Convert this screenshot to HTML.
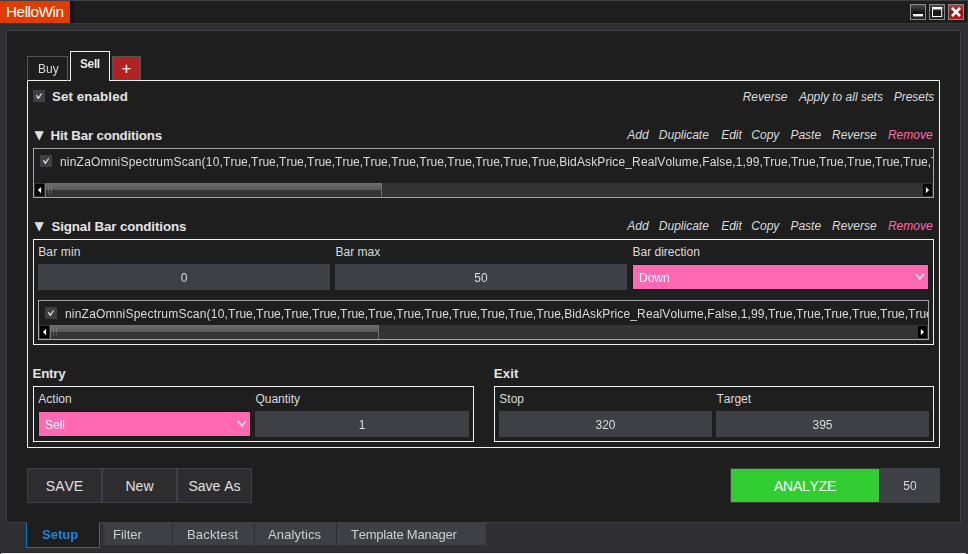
<!DOCTYPE html>
<html><head><meta charset="utf-8"><title>HelloWin</title>
<style>
html,body{margin:0;padding:0;}
body{width:968px;height:554px;overflow:hidden;background:#2f2f32;font-family:"Liberation Sans", "DejaVu Sans", sans-serif;position:relative;}
#root{position:absolute;left:0;top:0;width:968px;height:554px;overflow:hidden;}
#root div,#root .t,#root .a{position:absolute;}
.t{white-space:nowrap;font-kerning:none;}
.t span{position:static;}
.g{will-change:transform;}
.lk{position:absolute;white-space:nowrap;font-size:12px;line-height:16px;font-style:italic;}
.lk span{position:static !important;}
.clip{overflow:hidden;}
</style></head><body><div id="root">
<div style="left:0px;top:0px;width:968px;height:1px;background:#3f3f46;"></div>
<div style="left:0px;top:1px;width:967px;height:22px;background:#1e1e1e;"></div>
<div style="left:0px;top:23px;width:968px;height:1px;background:#38383c;"></div>
<div style="left:70px;top:1px;width:6px;height:22px;background:linear-gradient(to right,#111,#1e1e1e);"></div>
<div style="left:0px;top:1px;width:70px;height:22px;background:#e03c00;"></div>
<span class="t" style="left:6.0px;top:1.86px;font-size:15.4px;line-height:19.4px;color:#fff;letter-spacing:-0.5px;">HelloWin</span>
<div style="left:910px;top:4px;width:16px;height:16px;background:linear-gradient(#4a4a4a,#1a1a1a 50%,#101010 55%,#2a2a2a);box-sizing:border-box;border:1px solid #8a8a8a;overflow:hidden;"><div style="position:absolute;left:-1px;top:-1px"><svg width="16" height="16" viewBox="0 0 16 16"><rect x="3" y="10" width="10" height="2.4" fill="#fff"/></svg></div></div>
<div style="left:929px;top:4px;width:16px;height:16px;background:linear-gradient(#4a4a4a,#1a1a1a 50%,#101010 55%,#2a2a2a);box-sizing:border-box;border:1px solid #8a8a8a;overflow:hidden;"><div style="position:absolute;left:-1px;top:-1px"><svg width="16" height="16" viewBox="0 0 16 16"><rect x="3.5" y="3.5" width="9.2" height="9" fill="none" stroke="#fff" stroke-width="1"/><rect x="3" y="3" width="10.2" height="2.4" fill="#fff"/></svg></div></div>
<div style="left:948px;top:4px;width:16px;height:16px;background:linear-gradient(#c03a3a,#a01818 45%,#8e1010 50%,#b02020);box-sizing:border-box;border:1px solid #8a8a8a;overflow:hidden;"><div style="position:absolute;left:-1px;top:-1px"><svg width="16" height="16" viewBox="0 0 16 16"><path d="M4 4 L12 12 M12 4 L4 12" stroke="#fff" stroke-width="2.6" fill="none"/></svg></div></div>
<div style="left:6px;top:30px;width:955px;height:493px;background:#1e1e1e;border:1px solid #3f3f46;box-sizing:border-box;"></div>
<div style="left:27px;top:80px;width:913px;height:368px;background:#1e1e1e;border:1px solid #f0f0f0;box-sizing:border-box;"></div>
<div style="left:27px;top:56px;width:41px;height:25px;background:#1e1e1e;box-sizing:border-box;border:1px solid #555;border-bottom:1px solid #f0f0f0;"></div>
<div style="left:70px;top:51px;width:40px;height:30px;background:#1e1e1e;box-sizing:border-box;border:1px solid #f0f0f0;border-bottom:none;"></div>
<div style="left:112px;top:56px;width:29px;height:24px;background:#b22222;box-sizing:border-box;border:1px solid #555;border-bottom:none;"></div>
<span class="t" style="left:121.7px;top:59.06px;font-size:16px;line-height:20px;color:#fff;">+</span>
<div style="left:33px;top:90px;width:12px;height:12px;background:#3f3f46;"><svg width="12" height="12" viewBox="0 0 12 12" style="display:block"><polygon points="2.8,5.4 4.0,5.0 5.4,7.1 8.4,3.1 9.1,3.7 5.7,8.9 4.9,8.9" fill="#e2e2e2"/></svg></div>
<span class="t" style="left:52px;top:87.52px;font-size:13.33px;line-height:17.33px;color:#e4e4e4;font-weight:bold;letter-spacing:0.1px;">Set enabled</span>
<span class="t" style="left:742.7px;top:88.74px;font-size:12px;line-height:16px;color:#dcdcdc;font-style:italic;">Reverse</span>
<span class="t" style="left:798.9px;top:88.74px;font-size:12px;line-height:16px;color:#dcdcdc;font-style:italic;">Apply to all sets</span>
<span class="t" style="left:893.7px;top:88.74px;font-size:12px;line-height:16px;color:#dcdcdc;font-style:italic;">Presets</span>
<span class="t" style="left:627.3px;top:127.14px;font-size:12px;line-height:16px;color:#dcdcdc;font-style:italic;">Add</span>
<span class="t" style="left:658.8px;top:127.14px;font-size:12px;line-height:16px;color:#dcdcdc;font-style:italic;">Duplicate</span>
<span class="t" style="left:721.2px;top:127.14px;font-size:12px;line-height:16px;color:#dcdcdc;font-style:italic;">Edit</span>
<span class="t" style="left:751.3px;top:127.14px;font-size:12px;line-height:16px;color:#dcdcdc;font-style:italic;">Copy</span>
<span class="t" style="left:790.4px;top:127.14px;font-size:12px;line-height:16px;color:#dcdcdc;font-style:italic;">Paste</span>
<span class="t" style="left:832.0px;top:127.14px;font-size:12px;line-height:16px;color:#dcdcdc;font-style:italic;">Reverse</span>
<span class="t" style="left:887.9px;top:127.14px;font-size:12px;line-height:16px;color:#ff69b4;font-style:italic;">Remove</span>
<span class="t" style="left:627.3px;top:218.14px;font-size:12px;line-height:16px;color:#dcdcdc;font-style:italic;">Add</span>
<span class="t" style="left:658.8px;top:218.14px;font-size:12px;line-height:16px;color:#dcdcdc;font-style:italic;">Duplicate</span>
<span class="t" style="left:721.2px;top:218.14px;font-size:12px;line-height:16px;color:#dcdcdc;font-style:italic;">Edit</span>
<span class="t" style="left:751.3px;top:218.14px;font-size:12px;line-height:16px;color:#dcdcdc;font-style:italic;">Copy</span>
<span class="t" style="left:790.4px;top:218.14px;font-size:12px;line-height:16px;color:#dcdcdc;font-style:italic;">Paste</span>
<span class="t" style="left:832.0px;top:218.14px;font-size:12px;line-height:16px;color:#dcdcdc;font-style:italic;">Reverse</span>
<span class="t" style="left:887.9px;top:218.14px;font-size:12px;line-height:16px;color:#ff69b4;font-style:italic;">Remove</span>
<span class="t" style="left:34.4px;top:127.2px;font-family:'DejaVu Sans',sans-serif;font-size:12px;line-height:16px;color:#e0e0e0;">&#9660;</span>
<span class="t" style="left:50.6px;top:127.02px;font-size:13.33px;line-height:17.33px;color:#e4e4e4;font-weight:bold;letter-spacing:-0.19px;">Hit Bar conditions</span>
<span class="t" style="left:34.4px;top:217.89999999999998px;font-family:'DejaVu Sans',sans-serif;font-size:12px;line-height:16px;color:#e0e0e0;">&#9660;</span>
<span class="t" style="left:51.4px;top:217.52px;font-size:13.33px;line-height:17.33px;color:#e4e4e4;font-weight:bold;letter-spacing:-0.1px;">Signal Bar conditions</span>
<div style="left:33px;top:148px;width:901px;height:50px;background:#1e1e1e;border:1px solid #a4a4a4;box-sizing:border-box;"></div>
<div style="left:40px;top:155px;width:12px;height:12px;background:#3f3f46;"><svg width="12" height="12" viewBox="0 0 12 12" style="display:block"><polygon points="2.8,5.4 4.0,5.0 5.4,7.1 8.4,3.1 9.1,3.7 5.7,8.9 4.9,8.9" fill="#e2e2e2"/></svg></div>
<div style="left:34px;top:183px;width:899px;height:14px;background:#333333;"></div>
<div style="left:45px;top:183px;width:337px;height:14px;background:linear-gradient(#6e6e6e 0%,#585858 50%,#353535 50%,#353535 100%);box-sizing:border-box;border-right:1px solid #707070;border-left:1px solid #777;"></div>
<div style="left:48px;top:186px;width:1px;height:8px;background:rgba(255,255,255,.16);"></div>
<div style="left:51px;top:186px;width:1px;height:8px;background:rgba(255,255,255,.16);"></div>
<div style="left:35px;top:184px;width:9px;height:12px;background:#000;"><svg width="9" height="12" viewBox="0 0 9 12" style="display:block"><polygon points="2.8,6.1 6.1,3.0 6.1,9.2" fill="#fff"/></svg></div>
<div style="left:923px;top:184px;width:9px;height:12px;background:#000;"><svg width="9" height="12" viewBox="0 0 9 12" style="display:block"><polygon points="6.1,6.1 2.8,3.0 2.8,9.2" fill="#fff"/></svg></div>
<div style="left:33px;top:239px;width:901px;height:106px;background:#1e1e1e;border:1px solid #f0f0f0;box-sizing:border-box;"></div>
<span class="t" style="left:38.2px;top:243.74px;font-size:12px;line-height:16px;color:#dcdcdc;letter-spacing:0.15px;">Bar min</span>
<span class="t" style="left:335.5px;top:243.74px;font-size:12px;line-height:16px;color:#dcdcdc;">Bar max</span>
<span class="t" style="left:632.5px;top:243.74px;font-size:12px;line-height:16px;color:#dcdcdc;">Bar direction</span>
<div style="left:38px;top:264px;width:292px;height:26px;background:#3f3f46;"></div>
<div style="left:335px;top:264px;width:292px;height:26px;background:#3f3f46;"></div>
<div style="left:632px;top:264px;width:297px;height:26px;background:#181818;"></div>
<div style="left:633px;top:265px;width:295px;height:24px;background:#ff69b4;"></div>
<svg class="a" style="left:915px;top:273.1px" width="10" height="8" viewBox="0 0 10 8"><path d="M0.8 0.9 L4.9 5.8 L9.0 0.9" stroke="#d8d4d6" stroke-width="1.8" fill="none"/></svg>
<div style="left:38px;top:300px;width:891px;height:40px;background:#1e1e1e;border:1px solid #a4a4a4;box-sizing:border-box;"></div>
<div style="left:45px;top:307px;width:12px;height:12px;background:#3f3f46;"><svg width="12" height="12" viewBox="0 0 12 12" style="display:block"><polygon points="2.8,5.4 4.0,5.0 5.4,7.1 8.4,3.1 9.1,3.7 5.7,8.9 4.9,8.9" fill="#e2e2e2"/></svg></div>
<div style="left:39px;top:325px;width:889px;height:14px;background:#333333;"></div>
<div style="left:50px;top:325px;width:329px;height:14px;background:linear-gradient(#6e6e6e 0%,#585858 50%,#353535 50%,#353535 100%);box-sizing:border-box;border-right:1px solid #707070;border-left:1px solid #777;"></div>
<div style="left:53px;top:328px;width:1px;height:8px;background:rgba(255,255,255,.16);"></div>
<div style="left:56px;top:328px;width:1px;height:8px;background:rgba(255,255,255,.16);"></div>
<div style="left:40px;top:326px;width:9px;height:12px;background:#000;"><svg width="9" height="12" viewBox="0 0 9 12" style="display:block"><polygon points="2.8,6.1 6.1,3.0 6.1,9.2" fill="#fff"/></svg></div>
<div style="left:918px;top:326px;width:9px;height:12px;background:#000;"><svg width="9" height="12" viewBox="0 0 9 12" style="display:block"><polygon points="6.1,6.1 2.8,3.0 2.8,9.2" fill="#fff"/></svg></div>
<span class="t" style="left:32.6px;top:364.62px;font-size:13.33px;line-height:17.33px;color:#e4e4e4;font-weight:bold;letter-spacing:-0.27px;">Entry</span>
<span class="t" style="left:493.7px;top:364.62px;font-size:13.33px;line-height:17.33px;color:#e4e4e4;font-weight:bold;letter-spacing:0.1px;">Exit</span>
<div style="left:33px;top:386px;width:441px;height:56px;background:#1e1e1e;border:1px solid #f0f0f0;box-sizing:border-box;"></div>
<div style="left:494px;top:386px;width:440px;height:56px;background:#1e1e1e;border:1px solid #f0f0f0;box-sizing:border-box;"></div>
<span class="t" style="left:38.3px;top:390.84px;font-size:12px;line-height:16px;color:#dcdcdc;">Action</span>
<span class="t" style="left:255.4px;top:390.84px;font-size:12px;line-height:16px;color:#dcdcdc;">Quantity</span>
<span class="t" style="left:499.3px;top:390.84px;font-size:12px;line-height:16px;color:#dcdcdc;">Stop</span>
<span class="t" style="left:716.4px;top:390.84px;font-size:12px;line-height:16px;color:#dcdcdc;">Target</span>
<div style="left:38px;top:411px;width:213px;height:26px;background:#181818;"></div>
<div style="left:39px;top:412px;width:211px;height:24px;background:#ff69b4;"></div>
<svg class="a" style="left:237px;top:420.1px" width="10" height="8" viewBox="0 0 10 8"><path d="M0.8 0.9 L4.9 5.8 L9.0 0.9" stroke="#d8d4d6" stroke-width="1.8" fill="none"/></svg>
<div style="left:255px;top:411px;width:214px;height:26px;background:#3f3f46;"></div>
<div style="left:499px;top:411px;width:213px;height:26px;background:#3f3f46;"></div>
<div style="left:716px;top:411px;width:213px;height:26px;background:#3f3f46;"></div>
<div style="left:27px;top:468px;width:75px;height:35px;background:#2d2d30;border:1px solid #3f3f46;box-sizing:border-box;"></div>
<span class="t" style="left:27px;top:476.65px;font-size:14px;line-height:18px;color:#e0e0e0;width:75px;text-align:center;">SAVE</span>
<div style="left:102px;top:468px;width:75px;height:35px;background:#2d2d30;border:1px solid #3f3f46;box-sizing:border-box;"></div>
<span class="t" style="left:102px;top:476.65px;font-size:14px;line-height:18px;color:#e0e0e0;width:75px;text-align:center;">New</span>
<div style="left:177px;top:468px;width:75px;height:35px;background:#2d2d30;border:1px solid #3f3f46;box-sizing:border-box;"></div>
<span class="t" style="left:177px;top:476.65px;font-size:14px;line-height:18px;color:#e0e0e0;width:75px;text-align:center;">Save As</span>
<div style="left:730px;top:468px;width:150px;height:35px;background:#32cd32;border:1px solid #3a3a3e;box-sizing:border-box;"></div>
<span class="t" style="left:731px;top:476.95px;font-size:14px;line-height:18px;color:#fff;letter-spacing:-0.25px;width:148px;text-align:center;">ANALYZE</span>
<div style="left:880px;top:468px;width:60px;height:35px;background:#3f3f46;"></div>
<div style="left:100px;top:523px;width:386px;height:22px;background:#3f3f46;"></div>
<div style="left:172px;top:523px;width:1px;height:22px;background:#2d2d30;"></div>
<div style="left:254px;top:523px;width:1px;height:22px;background:#2d2d30;"></div>
<div style="left:336px;top:523px;width:1px;height:22px;background:#2d2d30;"></div>
<div style="left:100px;top:523px;width:6px;height:22px;background:linear-gradient(to right,rgba(0,0,0,.35),rgba(0,0,0,0));"></div>
<div style="left:27px;top:522px;width:72px;height:1px;background:#1e1e1e;"></div>
<div style="left:26px;top:523px;width:74px;height:25px;background:#1e1e1e;box-sizing:border-box;border:1px solid #007acc;border-top:none;"></div>
<div style="left:1px;top:553px;width:965px;height:1px;background:#f0f0f0;"></div>
<span class="t g" style="left:38.1px;top:60.84px;font-size:12px;line-height:16px;color:#dcdcdc;">Buy</span>
<span class="t g" style="left:80.2px;top:55.54px;font-size:12px;line-height:16px;color:#ececec;font-weight:bold;letter-spacing:-0.4px;">Sell</span>
<div class="clip" style="left:34px;top:149px;width:899px;height:24px;"><span class="t g" style="left:25.8px;top:4.84px;font-size:12px;line-height:16px;color:#dcdcdc;white-space:nowrap;"><span style="letter-spacing:0.2px">ninZaOmniSpectrumScan(10,</span>True,True,True,True,True,True,True,True,True,True,True,True,<span style="letter-spacing:0.13px">BidAskPrice_RealVolume,False,1,99,</span>True,True,True,True,True,True,True,True</span></div>
<span class="t g" style="left:38px;top:270.09px;font-size:12px;line-height:16px;color:#dcdcdc;width:292px;text-align:center;">0</span>
<span class="t g" style="left:335px;top:270.09px;font-size:12px;line-height:16px;color:#dcdcdc;width:292px;text-align:center;">50</span>
<span class="t g" style="left:638.7px;top:269.54px;font-size:12px;line-height:16px;color:#fff;">Down</span>
<div class="clip" style="left:39px;top:301px;width:889px;height:24px;"><span class="t g" style="left:25.8px;top:4.84px;font-size:12px;line-height:16px;color:#dcdcdc;white-space:nowrap;"><span style="letter-spacing:0.2px">ninZaOmniSpectrumScan(10,</span>True,True,True,True,True,True,True,True,True,True,True,True,<span style="letter-spacing:0.13px">BidAskPrice_RealVolume,False,1,99,</span>True,True,True,True,True,True,True,True</span></div>
<span class="t g" style="left:44.7px;top:416.54px;font-size:12px;line-height:16px;color:#fff;">Sell</span>
<span class="t g" style="left:255px;top:417.09px;font-size:12px;line-height:16px;color:#dcdcdc;width:214px;text-align:center;">1</span>
<span class="t g" style="left:499px;top:417.09px;font-size:12px;line-height:16px;color:#dcdcdc;width:213px;text-align:center;">320</span>
<span class="t g" style="left:716px;top:417.09px;font-size:12px;line-height:16px;color:#dcdcdc;width:213px;text-align:center;">395</span>
<span class="t g" style="left:880px;top:477.84px;font-size:12px;line-height:16px;color:#dcdcdc;width:60px;text-align:center;">50</span>
<span class="t g" style="left:42px;top:526.00px;font-size:13px;line-height:17px;color:#1c86dc;font-weight:bold;">Setup</span>
<span class="t g" style="left:113.4px;top:526.00px;font-size:13px;line-height:17px;color:#cfcfcf;">Filter</span>
<span class="t g" style="left:186.5px;top:526.00px;font-size:13px;line-height:17px;color:#cfcfcf;letter-spacing:0.17px;">Backtest</span>
<span class="t g" style="left:268.1px;top:526.00px;font-size:13px;line-height:17px;color:#cfcfcf;letter-spacing:0.13px;">Analytics</span>
<span class="t g" style="left:351.1px;top:526.00px;font-size:13px;line-height:17px;color:#cfcfcf;letter-spacing:-0.22px;">Template Manager</span>
</div></body></html>
